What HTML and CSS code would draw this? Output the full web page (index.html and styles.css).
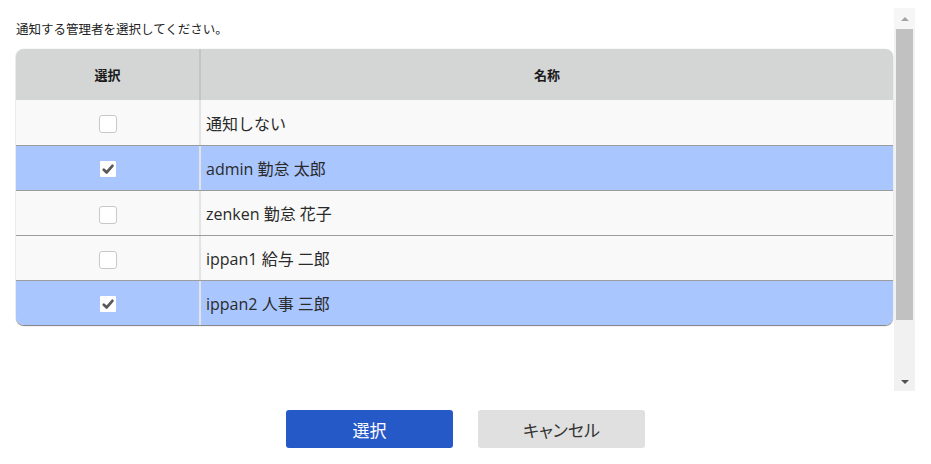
FILE: index.html
```html
<!DOCTYPE html>
<html lang="ja">
<head>
<meta charset="utf-8">
<title>通知先選択</title>
<link rel="stylesheet" href="styles.css">
</head>
<body>
<div class="dialog">
  <div class="pane">
    <div class="content">
      <p class="lead">通知する管理者を選択してください。</p>
      <div class="table">
        <div class="thead">
          <div class="c1">選択</div>
          <div class="c2 center">名称</div>
        </div>
        <div class="row">
          <div class="c1"><span class="cb"></span></div>
          <div class="c2">通知しない</div>
        </div>
        <div class="row selected">
          <div class="c1"><span class="cb checked"><svg viewBox="0 0 16 16" width="16" height="16"><path d="M3.8 8.8 L6.7 11.4 L12.4 4.8" fill="none" stroke="#5a5a5a" stroke-width="2.8" stroke-linecap="round" stroke-linejoin="round"/></svg></span></div>
          <div class="c2">admin 勤怠 太郎</div>
        </div>
        <div class="row">
          <div class="c1"><span class="cb"></span></div>
          <div class="c2">zenken 勤怠 花子</div>
        </div>
        <div class="row">
          <div class="c1"><span class="cb"></span></div>
          <div class="c2">ippan1 給与 二郎</div>
        </div>
        <div class="row selected">
          <div class="c1"><span class="cb checked"><svg viewBox="0 0 16 16" width="16" height="16"><path d="M3.8 8.8 L6.7 11.4 L12.4 4.8" fill="none" stroke="#5a5a5a" stroke-width="2.8" stroke-linecap="round" stroke-linejoin="round"/></svg></span></div>
          <div class="c2">ippan2 人事 三郎</div>
        </div>
      </div>
    </div>
    <div class="scrollbar">
      <div class="sb-btn up"><span class="tri-up"></span></div>
      <div class="sb-track"><div class="sb-thumb"></div></div>
      <div class="sb-btn down"><span class="tri-down"></span></div>
    </div>
  </div>
  <div class="actions">
    <button class="btn primary">選択</button>
    <button class="btn secondary">キャンセル</button>
  </div>
</div>
</body>
</html>
```

FILE: styles.css
```css
* { box-sizing: border-box; }
html, body { margin: 0; padding: 0; background: #fff; }
body {
  font-family: "Open Sans", "Noto Sans CJK JP", sans-serif;
  color: #222;
}
.dialog {
  padding: 8px 16px 0 8px;
}
.pane {
  display: flex;
  height: 383px;
}
.content {
  flex: 1;
  padding: 13px 1px 0 8px;
}
.lead {
  margin: 0 0 10px 0;
  font-size: 12.5px;
  line-height: 18px;
  color: #222;
}
.table {
  border-radius: 8px;
  overflow: hidden;
  box-shadow: 0 1px 1px rgba(0,0,0,0.5), 0 0 1px rgba(0,0,0,0.25);
}
.thead, .row {
  display: flex;
}
.thead {
  height: 51px;
  background: #d4d5d5;
  font-weight: bold;
  font-size: 13px;
  color: #1a1a1a;
}
.thead .c1 { border-right-color: #c4c4c4; }
.c1 {
  width: 185px;
  flex: none;
  border-right: 2px solid #e3e3e3;
  display: flex;
  align-items: center;
  justify-content: center;
}
.c2 {
  flex: 1;
  display: flex;
  align-items: center;
  padding-left: 5px;
}
.c2.center { justify-content: center; padding-left: 0; }
.row {
  height: 45px;
  background: #f9f9f9;
  font-size: 16px;
  color: #2a2a2a;
}
.row + .row { border-top: 1px solid #9c9c9c; }
.row.selected { background: #a9c6fe; }
.cb {
  width: 18px;
  height: 18px;
  border: 1px solid #c9c9c9;
  border-radius: 3px;
  background: #fff;
  margin-top: 3px;
  display: block;
}
.cb.checked {
  width: 16px;
  height: 16px;
  border: none;
  border-radius: 1px;
  margin-top: 2px;
}
.cb svg { display: block; }
.scrollbar {
  width: 21px;
  flex: none;
  background: #f1f1f1;
  display: flex;
  flex-direction: column;
}
.sb-btn {
  height: 21px;
  flex: none;
  display: flex;
  align-items: center;
  justify-content: center;
}
.sb-btn.up { background: #f6f6f6; }
.sb-track {
  flex: 1;
  padding: 0 2px;
}
.sb-thumb {
  height: 291px;
  background: #c1c1c1;
}
.tri-up {
  width: 0; height: 0;
  border-left: 4px solid transparent;
  border-right: 4px solid transparent;
  border-bottom: 4px solid #a3a3a3;
}
.tri-down {
  width: 0; height: 0;
  border-left: 4px solid transparent;
  border-right: 4px solid transparent;
  border-top: 4px solid #505050;
  margin-top: 2px;
}
.actions {
  display: flex;
  justify-content: center;
  gap: 25px;
  margin-top: 19px;
  padding-left: 8px;
}
.btn {
  width: 167px;
  height: 38px;
  border: none;
  border-radius: 3px;
  font-family: "Open Sans", "Noto Sans CJK JP", sans-serif;
  font-size: 17px;
  cursor: pointer;
}
.btn.primary { background: #2659c8; color: #fff; }
.btn.secondary { background: #e0e0e0; color: #333; font-feature-settings: "palt"; }
```
